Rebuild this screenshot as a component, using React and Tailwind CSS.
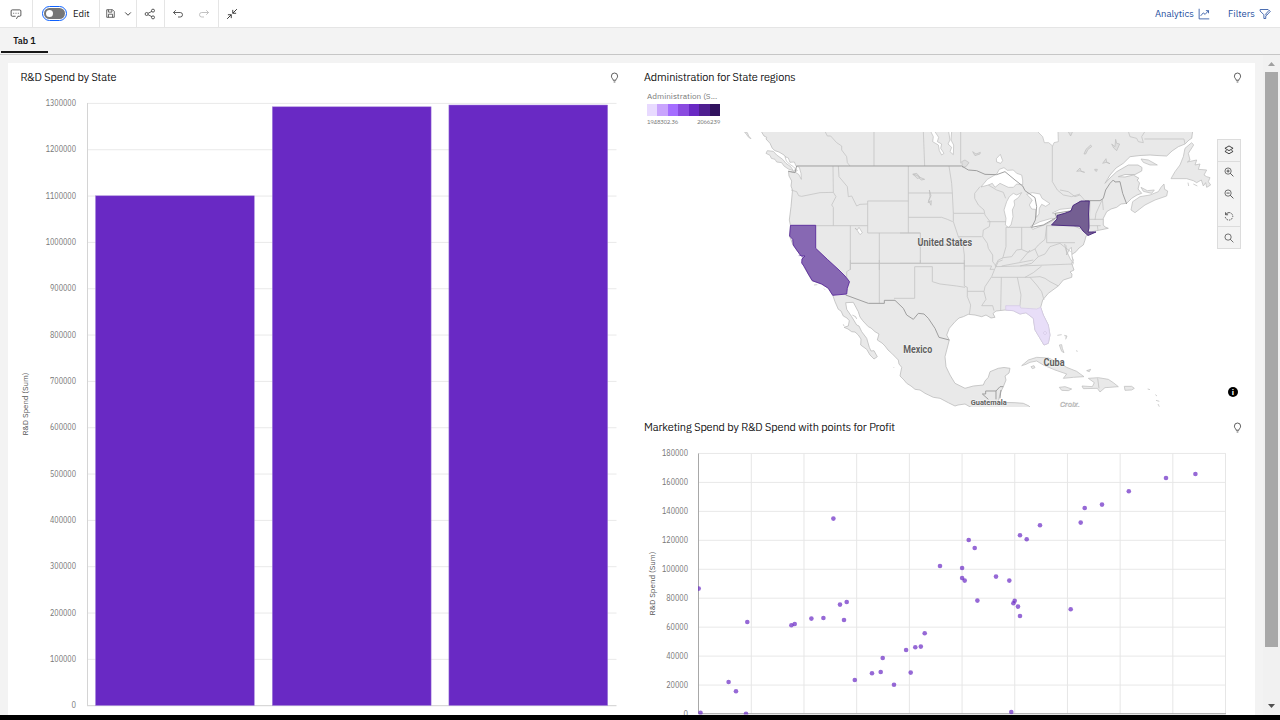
import React from "react";

const Svg = ({ className = "", children, size = 12 }) => (
  <svg width={size} height={size} viewBox="0 0 32 32" fill="none" stroke="currentColor" strokeWidth="2.2" className={`shrink-0 ${className}`}>
    {children}
  </svg>
);

const Bulb = () => (
  <Svg size={11}>
    <path d="M12 24h8M13.500 29h5M12 24c0-5-5-5.500-5-12a9 9 0 0 1 18 0c0 6.500-5 7-5 12" />
  </Svg>
);

const Toolbar = () => (
  <header className="flex h-[28px] shrink-0 items-stretch border-b border-[#e5e5e5] bg-white text-[#393939]">
    <div className="flex w-[33px] items-center justify-center border-r border-[#e5e5e5]">
      <Svg size={12}>
        <path d="M17 29l4-7h5a3 3 0 0 0 3-3V8a3 3 0 0 0-3-3H6a3 3 0 0 0-3 3v11a3 3 0 0 0 3 3h9" />
        <path d="M9 14h2M15 14h2M21 14h2" strokeWidth="3" />
      </Svg>
    </div>
    <div className="flex w-[67px] items-center border-r border-[#e5e5e5] pl-[9px]">
      <div className="flex h-[15px] w-[25px] items-center rounded-full border border-[#0f62fe] p-[1px]">
        <div className="flex h-[11px] w-full items-center rounded-full bg-[#767676] pl-[2px]">
          <div className="h-[7px] w-[7px] rounded-full bg-white" />
        </div>
      </div>
      <span className="ml-[6px] pt-[2px] text-[9.500px] text-[#161616]">Edit</span>
    </div>
    <div className="flex w-[37px] items-center gap-[7px] border-r border-[#e5e5e5] pl-[5px]">
      <Svg size={11}>
        <path d="M5 5h17l5 5v17H5zM10 5v7h10V5M10 27v-9h12v9" />
      </Svg>
      <Svg size={10}>
        <path d="M7 11l9 9 9-9" strokeWidth="3" />
      </Svg>
    </div>
    <div className="flex w-[28px] items-center border-r border-[#e5e5e5] pl-[7px]">
      <Svg size={12}>
        <circle cx="24" cy="7" r="4" /><circle cx="7" cy="16" r="4" /><circle cx="24" cy="25" r="4" />
        <path d="M11 14l10-5M11 18l10 5" />
      </Svg>
    </div>
    <div className="flex w-[54px] items-center gap-[14px] border-r border-[#e5e5e5] pl-[7px]">
      <Svg size={12}>
        <path d="M10 6l-6 6 6 6M4 12h18a6 6 0 0 1 0 12h-6" />
      </Svg>
      <Svg size={12} className="text-[#b5b5b5]">
        <path d="M22 6l6 6-6 6M28 12H10a6 6 0 0 0 0 12h6" />
      </Svg>
    </div>
    <div className="flex w-[26px] items-center justify-center">
      <Svg size={12}>
        <path d="M18 5v9h9M18 14L29 3M5 18h9v9M14 18L3 29" strokeWidth="2.600" />
      </Svg>
    </div>
    <div className="ml-auto flex items-center pr-[9px] text-[#264fa0]">
      <span className="w-[39px] whitespace-nowrap pt-[2px] text-[9.500px]">Analytics</span>
      <Svg size={12} className="ml-[4px]">
        <path d="M3 2v27h27M7 21l7-8 5 4 9-10M21 7h7v7" />
      </Svg>
      <span className="ml-[18px] w-[27px] whitespace-nowrap pt-[2px] text-[9.500px]">Filters</span>
      <Svg size={12} className="ml-[4px]">
        <path d="M18 28h-5V18L3 8V4h22M18 28v-7M19 20l-1-4L27 6l3 3-9 10z" />
      </Svg>
    </div>
  </header>
);

const bars = [
  { x: 95.5, top: 195.8 },
  { x: 272.3, top: 106.8 },
  { x: 448.900, top: 105 },
];

const BarChart = () => (
  <svg width="623" height="625" viewBox="8 90 623 625" className="block shrink-0">
    {Array.from({ length: 14 }, (_, i) => {
      const y = 705.7 - i * 46.33;
      return (
        <g key={i}>
          <line x1="87" x2="616.500" y1={y} y2={y} stroke={i ? "#e9e9e9" : "#cfcfcf"} />
          <text x="76" y={y + 2.600} textAnchor="end" fontSize="8.400" fill="#777" textLength={i === 0 ? 4.500 : i > 9 ? 30.300 : 26} lengthAdjust="spacingAndGlyphs">
            {i * 100000}
          </text>
        </g>
      );
    })}
    <line x1="87.500" x2="87.500" y1="103" y2="706" stroke="#d4d4d4" />
    {bars.map((b) => (
      <rect key={b.x} x={b.x} y={b.top} width="158.800" height={705.5 - b.top} fill="#6929c4" stroke="#a585dc" strokeWidth="0.500" />
    ))}
    <text transform="translate(28 404) rotate(-90)" textAnchor="middle" fontSize="8.200" fill="#555" textLength="63" lengthAdjust="spacingAndGlyphs">R&amp;D Spend (Sum)</text>
  </svg>
);

const points = [
  [698.7, 588.6], [747.3, 622], [791.4, 625.2], [794.7, 624], [811.4, 618.6], [823.4, 618], [833.4, 518.6], [840, 604.6],
  [846.7, 602], [844, 620], [854.8, 680], [872, 673.3], [880.7, 672], [882.7, 658], [894, 684.7], [906.1, 650], [910.7, 672.6],
  [915.3, 647.3], [920.8, 646.6], [924.7, 633.3], [940, 566], [728.6, 682], [736, 691.3], [746, 713.800], [700.5, 712.8],
  [962.1, 568], [962.1, 578], [964.7, 580.6], [968.7, 540], [974.7, 548], [977.4, 600.6], [996, 576.6], [1009.3, 580.6],
  [1013.4, 603.3], [1014.7, 600.8], [1018, 606.6], [1020, 616], [1020, 535.3], [1026.7, 539.3], [1040, 525.3],
  [1080.7, 522.6], [1084.7, 508], [1102, 504.6], [1070.7, 609.3], [1128.8, 491.3], [1166, 478], [1195.4, 474], [1011.3, 712],
];

const ScatterChart = () => (
  <svg width="623" height="275" viewBox="632 440 623 275" className="block shrink-0">
    <defs>
      <clipPath id="plot"><rect x="698" y="450" width="530" height="264.500" /></clipPath>
    </defs>
    {Array.from({ length: 10 }, (_, i) => {
      const y = 714 - i * 28.950;
      return (
        <g key={i}>
          <line x1="698" x2="1226" y1={y} y2={y} stroke="#e8e8e8" />
          <text x="688" y={y + 2.700} textAnchor="end" fontSize="8.400" fill="#777" textLength={i === 0 ? 4.500 : i > 4 ? 26 : 21.800} lengthAdjust="spacingAndGlyphs">
            {i * 20000}
          </text>
        </g>
      );
    })}
    {Array.from({ length: 10 }, (_, i) => (
      <line key={i} x1={751.300 + i * 52.690} x2={751.300 + i * 52.690} y1="453.500" y2="714" stroke="#e6e6e6" />
    ))}
    <path d="M698.500 453.500V713.700H1226" fill="none" stroke="#a8a8a8" />
    <g clipPath="url(#plot)" fill="#6929c4" fillOpacity="0.700">
      {points.map(([x, y]) => <circle key={`${x}-${y}`} cx={x} cy={y} r="2.300" />)}
    </g>
    <text transform="translate(655 583.500) rotate(-90)" textAnchor="middle" fontSize="8.200" fill="#555" textLength="64" lengthAdjust="spacingAndGlyphs">R&amp;D Spend (Sum)</text>
  </svg>
);

const continent = [
  // Pacific coast
  "M761 131L764 136 766.700 137.300 766 139 770 143.300 772.300 148.300 775 150.700 779 152 784 155 788 160 793 165 796 168.500 793 172 788.500 171",
  "789 176 791.700 181 791 186 792.500 190 791 206.700 789.300 220 790.500 225.700 789.500 236 793 245 801 256 804 267 812 280.700 821 284 828 288 832.700 295",
  // Baja California and the Gulf of California
  "835 301.700 836 304 838.300 309.300 841 311 843.300 316 847 318 849.300 320.700 848.300 326 844 327.300 848 329 851.700 331.700 855 332 858.300 335 861 339 860.700 345 866.700 349.300 870 355 874 359 877.300 356.700 874 350.700 871 351 869.300 347.300 866.700 338.300 861.700 331.700 859 326 856.700 325 851.700 316.700 846.700 309.300 845.700 302.700 853.300 302.300 858.300 311.700 860 317 862.700 320.700 868.300 326.700 871 328 875 331.700 879 334 877.300 340 882 343 885 346 888 350 891.700 353.300 898.300 360 899 364 901.700 367.300 900 376 904 380 906.700 383.300 911 386 915 389.300 920 390 925 393.300 933.300 397.300 940 398.300 948.300 402.700 955 406 958 405 965 404 972 408 1031 408",
  // Central America and Yucatan
  "1029 406 1023.300 403.300 1015 402.700 998.300 402.300 1000 393.300 1003.300 386.700 1006 380 1005 376 1009 373 1010 368.300 1004 367.500 998.300 368.300 990 371.700 988.300 377.300 985 381 983.300 385 973.300 386 965 388.300 955 383.300 950 375 946 366.700 945 356.700 949.300 340",
  // Gulf coast
  "946.700 335 949.300 328.300 955 321.700 959 318 963.300 316.700 968.300 314.300 975 315 981.700 316.700 986 315 991 318 995 317.300 993 313.500 996 311 1005 310 1013.300 310.700 1020 314 1026 312.700 1033.300 318.300 1035 330 1040 338.300 1044 345 1048.300 343.300 1050 335 1048.300 325 1043.300 315 1040.700 307.300",
  // Atlantic coast
  "1042.700 300 1048.300 293.300 1058.300 286 1063.300 280 1071.700 277.300 1072 274 1070 272 1074 270 1071.700 263.300 1073.300 260 1071 255 1076 251.700 1079 248 1083.300 245 1085 240 1086 236 1090 233.500 1093 231.500 1100 230 1108.300 228.300 1105 227 1103.300 225 1103.300 218.300 1106.700 211.700 1111 209 1116.700 207.300 1121 204 1126.700 203.300 1131.700 198.300 1137 195 1141.700 193.300 1138 189 1139.500 183 1137 180 1139 178.300 1133.300 175 1125 177 1118.300 176.700 1125 174.500 1135 174.500 1141.700 171 1142 167.500 1138 165 1128.300 165 1116.700 171.700 1110 178 1105 183.300 1110 175 1116 168 1123.300 163.300 1130 156.700 1140 155.500 1150 155 1157 155.500 1166.700 156 1172 151 1178.300 146.700 1185 144 1189 140 1191.700 138.300 1192.700 131Z",
].join(" ");

const California = "M790.500 225.300H815.700V248.300L827.300 259.300 839 270 845 276 849.500 281.700 847.300 288.300 846.700 294 832.700 295.300 828.300 288.300 821.700 284 812.300 280.700 808.300 274 804.300 266.700 801.700 263 802 259 805 256 801 256 796.700 250 793.300 245 792.700 239.300 789.600 236Z";
const NewYork = "M1051.500 225L1057 219V215.500L1064 213.500 1071 211 1073 205.500 1081 201H1089.300L1088.500 214 1089 228 1088 232 1096 232 1088 235.500 1083 231 1079.500 226.200Z";
const Florida = "M1005.700 305.700H1020L1020.700 308 1036.700 309 1040.700 307.300 1043.300 315 1048.300 325 1050 335 1048.300 343.300 1044 345 1040 338.300 1035 330 1033.300 318.300 1026 312.700 1020 314 1013.300 310.700 1005.700 310Z";

const Tile = ({ x, y, children }) => <g transform={`translate(${x} ${y}) scale(.33333)`}>{children}</g>;

const MapView = () => (
  <svg width="623" height="275" viewBox="632 132 623 275" className="block shrink-0" fill="none" strokeLinejoin="round">
    <path d={continent} fill="#e9e9e9" stroke="#bcbcbc" strokeWidth="0.800" />

    {/* islands */}
    <g fill="#e9e9e9" stroke="#bdbdbd" strokeWidth="2.200">
      <Tile x={740} y={130}>
        <path d="M12 4L22 8 26 18 33 26 26 22 20 14Z" />
        <path d="M82 62L78 70 90 76 94 85 105 88 110 96 125 98 132 108 145 117 160 122 152 110 138 100 128 88 110 75 100 64Z" />
      </Tile>
      <Tile x={1060} y={130}>
        <path d="M375 55L395 38 401 45 385 70 390 90 382 96 410 90 405 105 420 102 415 118 440 120 432 135 440 140 450 143 445 155 452 165 440 172 437 158 430 168 424 150 410 158 400 152 380 146 333 146 345 125 360 105 370 80Z" />
        <path d="M213 240L218 215 240 200 270 195 295 185 303 172 312 162 314 178 323 183 320 198 285 210 255 225 225 248Z" />
        <path d="M243 172L262 182 283 180 275 190 250 184ZM243 87L265 90 292 105 270 105 250 97Z" />
        <path d="M384 158L386 168M400 162L412 168" />
      </Tile>
      <Tile x={920} y={260}>
        <path d="M305 317L325 300 350 292 385 294 410 305 440 322 470 334 492 350 460 352 430 355 440 342 405 330 370 315 350 303 330 307 318 313Z" />
        <path d="M333 320L342 317 345 323 337 326ZM418 382L435 380 455 387 445 392 425 391ZM500 332L512 328 508 335ZM418 255L425 254 427 265 432 278 425 274ZM412 226L425 224M433 226L441 228 437 238M468 272L473 274" />
      </Tile>
      <Tile x={1060} y={260}>
        <path d="M85 355L115 353 145 358 160 368 175 380 150 382 135 383 120 396 112 385 70 386 66 378 97 380 103 368ZM193 379L215 379 223 385 215 390 195 391Z" />
        <path d="M113 355L117 385M263 387L270 389M286 404L291 408M288 421L298 424M294 432L298 440" />
      </Tile>
      <Tile x={740} y={260}>
        <path d="M222 75L232 74M252 86L255 89M310 193L312 198M337 165L347 170 350 177M460 321L462 323" />
      </Tile>
    </g>

    {/* lakes and bays */}
    <g fill="#fff" stroke="#b9b9b9" strokeWidth="2">
      <Tile x={900} y={130}>
        <path d="M243 171L262 148 290 132 298 118 312 113 322 121 340 120 350 130 365 135 368 150 368 165 350 162 340 172 325 172 300 160 285 172 277 160 265 165Z" />
        <path d="M325 292L316 285 318 265 312 240 320 215 328 200 340 190 350 195 365 188 355 203 342 212 344 225 337 240 339 260 333 285Z" />
        <path d="M380 193L397 188 420 192 426 205 450 221 437 229 425 223 418 235 417 252 409 262 407 238 395 237 388 225 397 210Z" />
        <path d="M392 289L420 275 455 265 464 268 440 282 398 298ZM457 249L480 238 517 234 510 249 470 253Z" />
        <path d="M412 4L428 20 433 38 446 38 458 48 462 38 475 35 474 4Z" stroke="#bdbdbd" />
        <path d="M92 4L100 20 98 35 115 45 118 62 125 75 132 70 122 55 125 42 112 35 116 22 104 4ZM146 4L150 30 144 42 155 52 150 65 160 74 161 45 153 30 155 4Z" />
        <path d="M289 86L301 73 308 92 302 100 290 96Z" />
      </Tile>
      <Tile x={740} y={130}>
        <path d="M345 294L352 300 357 292 367 308 360 314 352 302Z" />
        <path d="M135 80L145 84 150 97 163 96 168 108 178 112 183 130 184 148 176 133 164 126 172 122 160 110 148 102 139 93Z" />
        <path d="M176 377L200 375 186 379 190 392" stroke="#8a6bb8" />
      </Tile>
      <Tile x={1060} y={130}>
        <path d="M14 343L18 347 20 375 28 358 34 352 36 378 40 400 30 385 24 372 18 360Z" />
      </Tile>
    </g>
    <g fill="#dedede" stroke="#bdbdbd" strokeWidth="2">
      <Tile x={900} y={130}>
        <path d="M218 65L228 72 241 67 240 72 225 77ZM40 132L50 130 60 142 74 148 64 150 50 138ZM88 180L90 200 86 212 93 226 94 212 84 218 93 197ZM185 95L195 90 207 98 198 110 188 112Z" />
      </Tile>
      <Tile x={740} y={130}>
        <path d="M518 133L530 136 540 142 532 146 525 138Z" />
      </Tile>
      <Tile x={1060} y={130}>
        <path d="M72 72L78 58 92 45 95 50 84 58 77 72ZM155 42L165 50 167 28 170 40 179 42 170 62 161 54ZM128 100L138 86 140 96 150 101 138 97ZM50 124L60 114 64 124 74 127 60 123ZM104 118L112 118 110 124 105 122ZM24 4L32 18 38 4" />
      </Tile>
    </g>

    {/* state and province boundaries */}
    <g stroke="#c3c3c3" strokeWidth="2.300">
      <Tile x={740} y={130}>
        <path d="M153 180L170 185 176 197 185 199 240 188 280 187M279 108L280 187 288 200 275 225 280 232 280 287M295 108L297 140 322 170 325 200 335 198 350 228 360 223 383 222M150 287H383M383 213V309M383 213H505M505 108V309M383 309H541M331 287V420M418 309V420M331 400H540M255 4L262 18 272 18 290 38 305 48 305 60 320 80 322 98 330 108M402 4V108" />
      </Tile>
      <Tile x={900} y={130}>
        <path d="M25 189H157M25 262H125L142 268 158 275M0 309H61V400M61 345H190M70 4L74 108M182 4V100M147 108L155 160 157 189 160 250V275L175 320 188 338 193 375V420M160 250H252M240 170L224 190 224 205 235 225 252 240 255 255 270 275 268 290 250 300 248 320 262 340 265 355 278 375 278 395 290 410M262 275H318M265 165L290 180 310 187 317 205M175 320H245M0 400H193M318 292V350L308 385M318 292H395M365 292V358M285 408L295 390 310 383 335 380 350 360 364 358 385 367 405 357 415 345 435 328 440 287M440 287H520L540 296M440 287V338H525M405 357L415 380 435 372 450 350 480 340 495 352 512 365M415 380L395 400 360 408M457 48V155L472 180 490 195 515 200 540 192" />
      </Tile>
      <Tile x={1060} y={130}>
        <path d="M0 180L25 185 45 200 60 195 75 212M90 212L88 290M128 206L108 250 105 270M88 268H130M88 287H122M112 287L114 300M127 208L130 240M205 4L210 20 230 25 235 35 250 38 245 20 255 4M253 27H372L375 42" />
      </Tile>
      <Tile x={740} y={260}>
        <path d="M331 0V28L320 35V52L328 65M331 10H673M418 0V130M524 20V115H462M524 20H577V65L600 72 650 78 675 82M541 0V10" />
      </Tile>
      <Tile x={920} y={260}>
        <path d="M133 0V78L142 82V110L152 135 148 163M133 18H215L210 28H222M248 0L235 5 225 25 215 50 195 80 192 95 198 118 185 137H218L222 152M142 94H192M215 52H330M225 20L300 18 460 12M244 52L242 152M292 52L303 105 300 137M330 52L350 75 365 95 372 120M330 52L360 50 375 55 390 65 415 78M315 52L340 38 365 18M245 18L340 0M330 -30L300 5" />
      </Tile>
    </g>

    {/* national borders */}
    <g stroke="#999" strokeWidth="2.800">
      <Tile x={740} y={130}><path d="M170 108H665M145 124L165 128 170 108" /></Tile>
      <Tile x={900} y={130}>
        <path d="M185 108L205 120 230 122 255 133 290 134 315 125 345 150 368 168 375 182 405 203 410 230 406 270 395 292 430 285 470 262 465 250 510 243 540 214" />
      </Tile>
      <Tile x={1060} y={130}><path d="M75 212H120L130 205 137 180 150 160 160 150 165 156 180 155 188 190 200 222" /></Tile>
      <Tile x={740} y={260}>
        <path d="M317 105L385 130H433V121H465L490 145 500 165 520 178 535 160 552 162 565 175 585 205 597 232 628 240" />
      </Tile>
      <Tile x={920} y={260}><path d="M187 402L197 402V393H228V418M228 393L240 380 250 380M187 402L205 418M243 390L240 415" /></Tile>
    </g>

    <path d={California} fill="#8768b3" stroke="#5a2a9c" strokeWidth="0.900" />
    <path d={NewYork} fill="#745f92" stroke="#45217c" strokeWidth="0.900" />
    <path d={Florida} fill="#e8def8" stroke="#d3c8e4" strokeWidth="0.700" />
    <path d="M1043 333l2-2 2 2-2 2z" stroke="#d3c8e4" strokeWidth="0.600" />

    <g fill="#616161" fontWeight="700" textAnchor="middle" stroke="#fff" strokeOpacity="0.600" strokeWidth="1.200" paintOrder="stroke" className="font-['Roboto',sans-serif]">
      <text x="944.800" y="246.400" fontSize="10" textLength="54.500" lengthAdjust="spacingAndGlyphs">United States</text>
      <text x="917.700" y="353.400" fontSize="10" textLength="29" lengthAdjust="spacingAndGlyphs">Mexico</text>
      <text x="1054" y="366.400" fontSize="10" textLength="21" lengthAdjust="spacingAndGlyphs">Cuba</text>
      <text x="988.700" y="405" fontSize="7.500" textLength="36" lengthAdjust="spacingAndGlyphs">Guatemala</text>
    </g>
    <text x="1060" y="406.700" fontSize="8" fontStyle="italic" fill="#fff" stroke="#b5b5b5" strokeWidth="0.500" textLength="20" className="font-['Roboto',sans-serif]">Croix.</text>
  </svg>
);

const MapButton = ({ children, className = "" }) => (
  <div className={`flex h-[21.600px] items-center justify-center pr-[1px] ${className}`}>
    <Svg size={10}>{children}</Svg>
  </div>
);

const MapControls = () => (
  <div className="absolute right-[14px] top-[7px] flex h-[110px] w-[24px] flex-col border border-[#dcdcdc] bg-[#f3f3f3] text-[#393939]">
    <MapButton className="border-b border-[#dcdcdc]">
      <path d="M16 3l13 7.500L16 18 3 10.500zM3 20.500L16 28l13-7.500M3 20.500l5-3M29 20.500l-5-3" strokeWidth="3" />
    </MapButton>
    <MapButton><circle cx="13" cy="13" r="10" /><path d="M20 20l10 10M8 13h10M13 8v10" strokeWidth="2.600" /></MapButton>
    <MapButton><circle cx="13" cy="13" r="10" /><path d="M20 20l10 10M8 13h10" strokeWidth="2.600" /></MapButton>
    <MapButton><path d="M5 4v8h8M6 11a12 12 0 0 1 10-6" strokeWidth="2.600" /><path d="M16 5a12 12 0 1 1-12 13" strokeWidth="2.600" strokeDasharray="5 3" /></MapButton>
    <MapButton className="border-t border-[#dcdcdc]"><circle cx="13" cy="13" r="10" /><path d="M20 20l10 10" /></MapButton>
  </div>
);

const WidgetTitle = ({ children, className = "" }) => (
  <div className={`flex h-[28px] shrink-0 items-center justify-between pr-[12px] text-[#2b2b2b] ${className}`}>
    <h2 className="whitespace-nowrap text-[11px] font-light tracking-[-0.080px] text-black [-webkit-text-stroke:0.150px_#000]">{children}</h2>
    <Bulb />
  </div>
);

const Legend = () => (
  <div className="flex h-[41px] w-[88px] shrink-0 flex-col pl-[15px] text-[#777]">
    <div className="h-[13px] whitespace-nowrap text-[8.200px] leading-[11px]">Administration (S...</div>
    <div className="flex h-[12px]">
      {["bg-[#e8daff]", "bg-[#c9a4fd]", "bg-[#a56eff]", "bg-[#8a4be0]", "bg-[#6929c4]", "bg-[#4f1f91]", "bg-[#31135e]"].map((c) => (
        <div key={c} className={`flex-1 ${c}`} />
      ))}
    </div>
    <div className="mt-[1px] flex justify-between text-[6px] leading-[10px] tracking-[-0.300px]">
      <span>1948302.36</span>
      <span>2066239</span>
    </div>
  </div>
);

export default function App() {
  return (
    <div className="flex h-screen w-full flex-col overflow-hidden bg-[#f3f3f3] font-['IBM_Plex_Sans','Roboto',sans-serif]">
      <Toolbar />
      <nav className="flex h-[27px] shrink-0 border-b border-[#c6c6c6] pl-[1px]">
        <div className="flex h-[25px] w-[47px] items-center justify-center border-b-2 border-[#161616] pt-[3px] text-[9px] font-semibold text-[#161616]">Tab 1</div>
      </nav>
      <div className="flex min-h-0 flex-1">
        <main className="ml-[8px] mt-[8px] flex w-[1247px] overflow-hidden bg-white">
          <section className="flex w-[624px] flex-col">
            <WidgetTitle className="pl-[12.500px]">R&amp;D Spend by State</WidgetTitle>
            <div className="-mt-[1px]"><BarChart /></div>
          </section>
          <section className="flex w-[623px] flex-col">
            <WidgetTitle className="pl-[12px]">Administration for State regions</WidgetTitle>
            <Legend />
            <div className="relative h-[275px] shrink-0">
              <MapView />
              <MapControls />
              <div className="absolute bottom-[10px] right-[17px] flex h-[10px] w-[10px] items-center justify-center rounded-full bg-black text-[8px] font-bold leading-none text-white">i</div>
            </div>
            <div className="mt-[6px] flex h-[27px] shrink-0 flex-col">
              <WidgetTitle className="pl-[12px]">Marketing Spend by R&amp;D Spend with points for Profit</WidgetTitle>
            </div>
            <ScatterChart />
          </section>
        </main>
        <aside className="ml-auto flex w-[17px] flex-col items-center justify-between bg-[#f1f1f1] py-[7px]">
          <div className="flex flex-col items-center gap-[6px]">
            <svg width="7" height="4" viewBox="0 0 7 4"><path d="M0 4L3.500 0 7 4z" fill="#a0a0a0" /></svg>
            <div className="h-[575px] w-[13px] bg-[#a8a8a8]" />
          </div>
          <svg width="7" height="4" viewBox="0 0 7 4"><path d="M0 0L3.500 4 7 0z" fill="#505050" /></svg>
        </aside>
      </div>
      <footer className="h-[5px] shrink-0 bg-black" />
    </div>
  );
}
